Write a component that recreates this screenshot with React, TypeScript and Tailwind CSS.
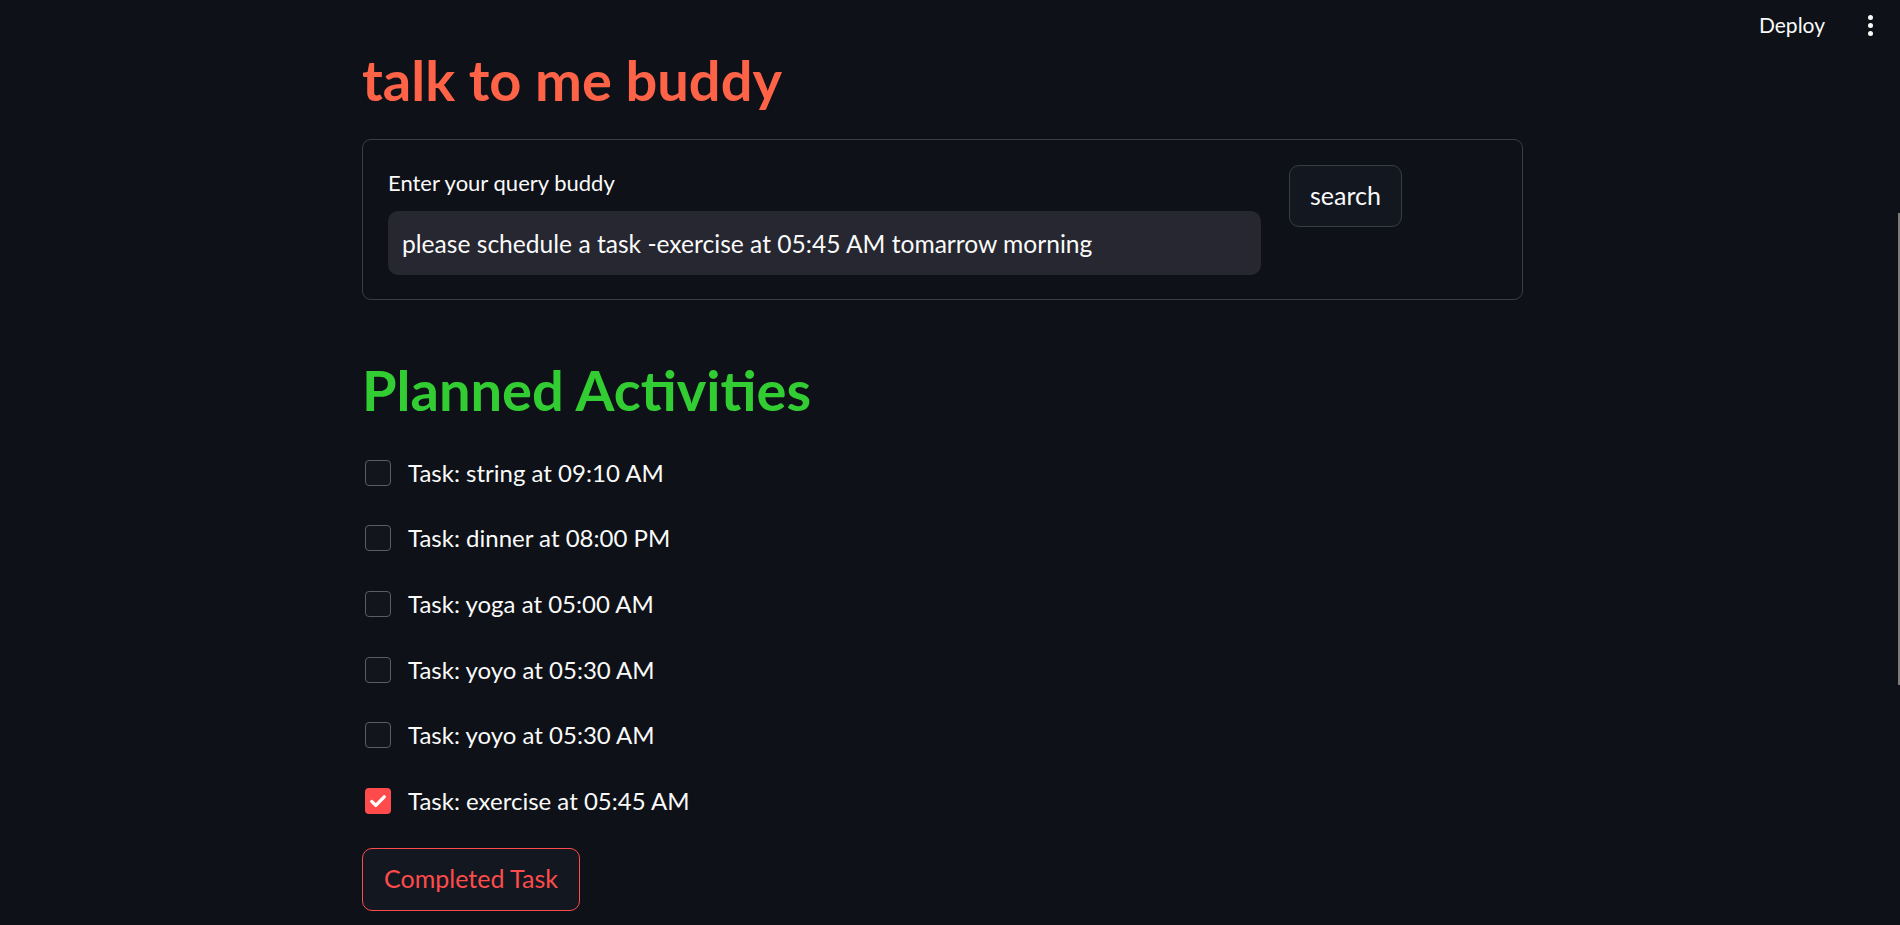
import { useState } from "react";

interface Task {
  label: string;
  done: boolean;
}

const initialTasks: Task[] = [
  { label: "Task: string at 09:10 AM", done: false },
  { label: "Task: dinner at 08:00 PM", done: false },
  { label: "Task: yoga at 05:00 AM", done: false },
  { label: "Task: yoyo at 05:30 AM", done: false },
  { label: "Task: yoyo at 05:30 AM", done: false },
  { label: "Task: exercise at 05:45 AM", done: true },
];

const font = "font-['Lato','Liberation_Sans',sans-serif]";

const CheckRow = ({ task, onToggle }: { task: Task; onToggle: () => void }) => (
  <label className="flex items-center h-[65.6px] cursor-pointer">
    <span
      onClick={onToggle}
      className={
        task.done
          ? "w-[26px] h-[26px] ml-[3px] rounded-[4px] bg-[#ff4b4b] flex items-center justify-center"
          : "w-[26px] h-[26px] ml-[3px] rounded-[4px] border border-[#5a5c66] bg-[#12151c]"
      }
    >
      {task.done && (
        <svg width="20" height="20" viewBox="0 0 24 24" fill="none">
          <path d="M4.5 12.5l4.8 4.8L19.5 7" stroke="white" strokeWidth="4" strokeLinecap="round" strokeLinejoin="round" />
        </svg>
      )}
    </span>
    <span className="ml-[17px] text-[24px] text-[#fafafa]">{task.label}</span>
  </label>
);

const App = () => {
  const [tasks, setTasks] = useState(initialTasks);
  const [query, setQuery] = useState(
    "please schedule a task -exercise at 05:45 AM tomarrow morning"
  );

  return (
    <div className={`relative w-full h-[925px] overflow-hidden bg-[#0e1117] ${font}`}>
      {/* streamlit header overlay */}
      <div className="absolute top-0 right-0 h-[50px] flex items-center gap-[43px] pr-[27px]">
        <span className="text-[21px] text-[#fafafa]">Deploy</span>
        <div className="flex flex-col items-center gap-[3px]">
          <span className="w-[5px] h-[5px] rounded-full bg-[#fafafa]" />
          <span className="w-[5px] h-[5px] rounded-full bg-[#fafafa]" />
          <span className="w-[5px] h-[5px] rounded-full bg-[#fafafa]" />
        </div>
      </div>
      <div className="absolute right-0 top-[213px] w-[2px] h-[472px] bg-[#7c7c7c]" />

      <div className="ml-[362px] w-[1161px] pt-[44px] flex flex-col">
        <h1 className="text-[56px] leading-[72px] font-bold text-[#ff6347]">talk to me buddy</h1>

        <div className="mt-[23px] h-[161px] border border-[#3b3d45] rounded-[9px] px-[25px] flex gap-[28px]">
          <div className="w-[873px] flex flex-col pt-[30px]">
            <span className="text-[22px] text-[#fafafa] leading-[26px]">Enter your query buddy</span>
            <input
              value={query}
              onChange={(e) => setQuery(e.target.value)}
              className="mt-[15px] h-[64px] w-full rounded-[10px] bg-[#262730] px-[14px] text-[24.6px] text-[#fafafa] outline-none"
            />
          </div>
          <div className="pt-[25px]">
            <button className="w-[113px] h-[62px] rounded-[10px] border border-[#3b3d45] bg-[#131720] text-[25px] text-[#fafafa]">
              search
            </button>
          </div>
        </div>

        <h2 className="mt-[50px] text-[56px] leading-[80px] font-bold text-[#32cd32]">Planned Activities</h2>

        <div className="mt-[10px] flex flex-col">
          {tasks.map((t, i) => (
            <CheckRow
              key={i}
              task={t}
              onToggle={() =>
                setTasks((prev) => prev.map((p, j) => (j === i ? { ...p, done: !p.done } : p)))
              }
            />
          ))}
        </div>

        <div className="mt-[14px]">
          <button className="w-[218px] h-[63px] rounded-[10px] border border-[#ff4b4b] bg-[#131720] text-[25px] text-[#ff4b4b]">
            Completed Task
          </button>
        </div>
      </div>
    </div>
  );
};

export default App;
